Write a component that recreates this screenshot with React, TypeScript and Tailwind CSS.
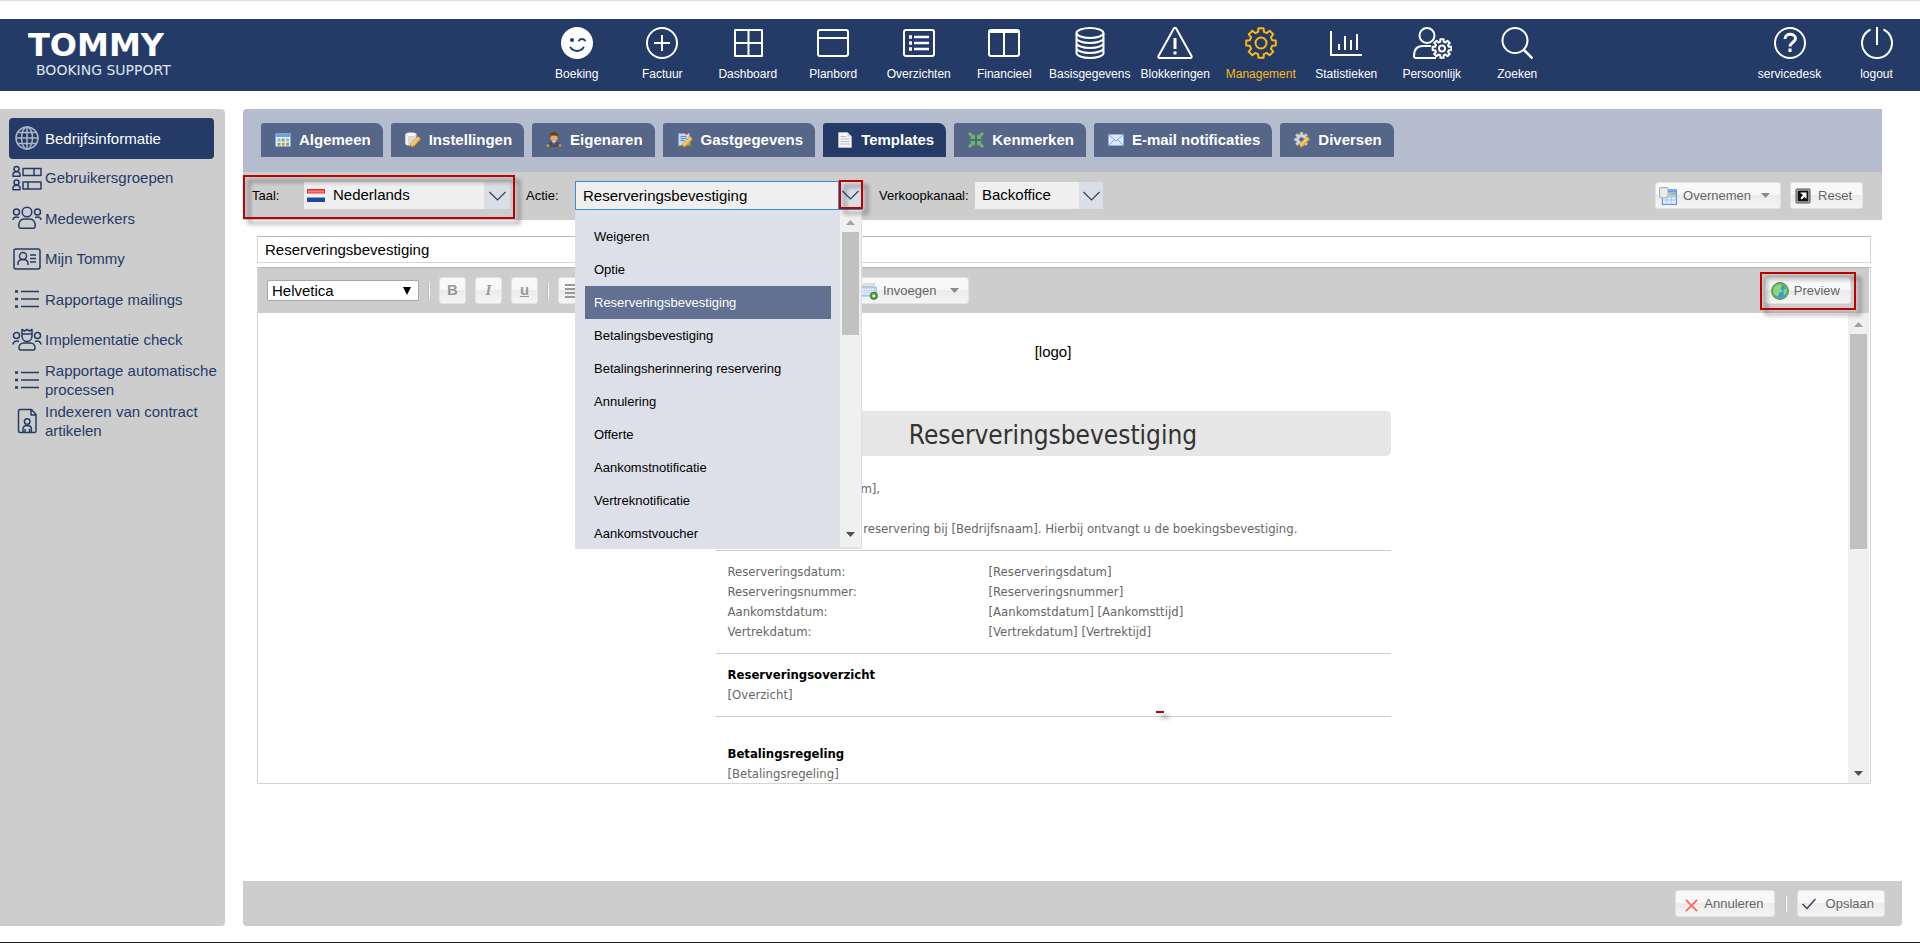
import type { ReactNode } from 'react';

function gearPath(cx: number, cy: number, outer: number, inner: number, teeth: number): string {
  const step = (Math.PI * 2) / teeth;
  const points: string[] = [];
  for (let i = 0; i < teeth; i++) {
    const a = i * step - Math.PI / 2;
    const corners: [number, number][] = [
      [inner, a - step * 0.32],
      [outer, a - step * 0.22],
      [outer, a + step * 0.22],
      [inner, a + step * 0.32],
    ];
    corners.forEach(([r, t]) => points.push(`${(cx + r * Math.cos(t)).toFixed(2)} ${(cy + r * Math.sin(t)).toFixed(2)}`));
  }
  return `M${points.join('L')}Z`;
}

function Line({ children, w = 32, h = 32, sw = 2 }: { children: ReactNode; w?: number; h?: number; sw?: number }) {
  return (
    <svg
      width={w}
      height={h}
      viewBox={`0 0 ${w} ${h}`}
      fill="none"
      stroke="currentColor"
      strokeWidth={sw}
      strokeLinejoin="round"
      aria-hidden="true"
      className="shrink-0"
    >
      {children}
    </svg>
  );
}

const navItems: { label: string; icon: ReactNode; active?: boolean }[] = [
  {
    label: 'Boeking',
    icon: (
      <Line>
        <circle cx="16" cy="16" r="16" fill="currentColor" stroke="none" />
        <circle cx="11" cy="13" r="2" fill="#243b67" stroke="none" />
        <path d="M18 13.5c1.500-2 4.500-2 6 0M9.500 20.500c3 4.500 10 4.500 13 0" stroke="#243b67" strokeLinecap="round" />
      </Line>
    ),
  },
  {
    label: 'Factuur',
    icon: (
      <Line>
        <circle cx="16" cy="16" r="15" />
        <path d="M16 8v16M8 16h16" />
      </Line>
    ),
  },
  {
    label: 'Dashboard',
    icon: (
      <Line>
        <path d="M3 3h27v26H3zM16.500 3v26M3 16h27" />
      </Line>
    ),
  },
  {
    label: 'Planbord',
    icon: (
      <Line>
        <rect x="1" y="3" width="30" height="26" rx="2" />
        <path d="M1 11h30" />
      </Line>
    ),
  },
  {
    label: 'Overzichten',
    icon: (
      <Line>
        <rect x="1" y="3" width="30" height="26" rx="2" />
        <path d="M11 10h15M11 16h15M11 22h15" strokeWidth="2.500" />
        <path d="M6 10h3M6 16h3M6 22h3" strokeWidth="3.500" />
      </Line>
    ),
  },
  {
    label: 'Financieel',
    icon: (
      <Line>
        <rect x="1" y="3" width="30" height="26" rx="2" />
        <path d="M16 3v26" />
        <path d="M1 4.500h30" strokeWidth="3" />
      </Line>
    ),
  },
  {
    label: 'Basisgegevens',
    icon: (
      <Line>
        <ellipse cx="16" cy="6" rx="13.500" ry="5" />
        <path d="M2.500 6v20c0 2.800 6 5 13.500 5s13.500-2.200 13.500-5V6M2.500 11c0 2.800 6 5 13.500 5s13.500-2.200 13.500-5M2.500 16c0 2.800 6 5 13.500 5s13.500-2.200 13.500-5M2.500 21c0 2.800 6 5 13.500 5s13.500-2.200 13.500-5" />
      </Line>
    ),
  },
  {
    label: 'Blokkeringen',
    icon: (
      <Line w={36}>
        <path d="M16.800 1.500Q18 0 19.200 1.500L34.500 29Q35 31 33.500 31H2.500Q1 31 1.500 29Z" />
        <path d="M18 11v11M18 24.500v3" strokeWidth="3" />
      </Line>
    ),
  },
  {
    label: 'Management',
    active: true,
    icon: (
      <Line>
        <path d={gearPath(16, 16, 15, 11.5, 8)} />
        <circle cx="16" cy="16" r="5.500" />
      </Line>
    ),
  },
  {
    label: 'Statistieken',
    icon: (
      <Line>
        <path d="M1 4v24h31M9 23v-6M15 23V9M21 23V13M27 23V7" />
      </Line>
    ),
  },
  {
    label: 'Persoonlijk',
    icon: (
      <Line w={40}>
        <circle cx="15" cy="8.500" r="7.500" />
        <path d="M24 31H4c-1.500 0-2-.5-2-2 0-7 3-10 9-10h8" />
        <path d={gearPath(30, 21.500, 9.500, 7, 8)} />
        <circle cx="30" cy="21.500" r="3" />
      </Line>
    ),
  },
  {
    label: 'Zoeken',
    icon: (
      <Line>
        <circle cx="14" cy="13.500" r="12.500" />
        <path d="M22.500 22.500l9 9" strokeWidth="2.500" />
      </Line>
    ),
  },
];

const userItems: { label: string; icon: ReactNode }[] = [
  {
    label: 'servicedesk',
    icon: (
      <Line>
        <circle cx="16" cy="16" r="15" />
        <path d="M11 12c0-6.500 10.500-6 10.500-.5 0 4-5.500 4-5.500 8M16 21.500v3.500" strokeWidth="3" />
      </Line>
    ),
  },
  {
    label: 'logout',
    icon: (
      <Line>
        <path d="M9.500 2.500a15 15 0 1 0 13 0M16 0v18" />
      </Line>
    ),
  },
];

const listIcon = (
  <Line w={30} h={24} sw={1.5}>
    <path d="M9 4.500h18M9 12h18M9 19.500h18" />
    <path d="M3 4.500h3M3 12h3M3 19.500h3" strokeWidth="2.500" />
  </Line>
);

const sideItems: { label: string; icon: ReactNode }[] = [
  {
    label: 'Gebruikersgroepen',
    icon: (
      <Line w={30} h={26} sw={1.5}>
        <circle cx="4.500" cy="4" r="2.500" />
        <path d="M1 11.200V9.500C1 7.500 2.500 6.700 4.500 6.700S8 7.500 8 9.500v1.700z" />
        <circle cx="4.500" cy="17.500" r="2.500" />
        <path d="M1 24.700V23c0-2 1.500-2.800 3.500-2.800S8 21 8 23v1.700z" />
        <path d="M11 3.500h18v7H11zM22 3.500v7M11 17h18v7H11zM16 17v7" />
      </Line>
    ),
  },
  {
    label: 'Medewerkers',
    icon: (
      <Line w={30} h={24} sw={1.5}>
        <circle cx="15" cy="6" r="4.800" />
        <circle cx="4.500" cy="6" r="3" />
        <circle cx="25.500" cy="6" r="3" />
        <path d="M7 21c-1-5 2-8 5-8h6c3 0 6 3 5 8-.2.8-1 1.200-1.500 1.200h-13C8 22.200 7.200 21.800 7 21zM1 14c0-3 3-3.500 6-2.500M29 14c0-3-3-3.500-6-2.500" />
      </Line>
    ),
  },
  {
    label: 'Mijn Tommy',
    icon: (
      <Line w={30} h={24} sw={1.5}>
        <rect x="2" y="2" width="26" height="20" rx="2" />
        <circle cx="11" cy="9" r="3.500" />
        <path d="M6 18v-1.500c0-2.500 2-4 5-4s5 1.500 5 4V18M18 8h6M18 11.500h6M18 15h6" />
      </Line>
    ),
  },
  { label: 'Rapportage mailings', icon: listIcon },
  {
    label: 'Implementatie check',
    icon: (
      <Line w={30} h={24} sw={1.5}>
        <path d="M10 8V1.500l2.500 1.500L15 1.500 17.500 3 20 1.500V8c0 3-2 5.500-5 5.500S10 11 10 8zM10 6h10" />
        <circle cx="4.500" cy="7.500" r="3" />
        <circle cx="25.500" cy="7.500" r="3" />
        <path d="M7 20c0-3 2-5 4.500-5h7c2.500 0 4.500 2 4.500 5 0 1.500-.5 2-2 2H9c-1.500 0-2-.5-2-2zM1 16.500c0-3 3-4 6-3M29 16.500c0-3-3-4-6-3" />
      </Line>
    ),
  },
  { label: 'Rapportage automatische processen', icon: listIcon },
  {
    label: 'Indexeren van contract artikelen',
    icon: (
      <Line w={30} h={26} sw={1.5}>
        <path d="M8 1.500h11.500l4.500 5V23q0 1.500-1.500 1.500H8Q6.500 24.500 6.500 23V3Q6.500 1.500 8 1.500zM19 1.500V7h5" />
        <circle cx="15.200" cy="13.500" r="2.800" />
        <path d="M11 24v-3c0-2 1.500-3.500 4.200-3.500s4.200 1.500 4.200 3.500v3M13 21v3M17.500 21v3" />
      </Line>
    ),
  },
];

function Small({ children, size = 16 }: { children: ReactNode; size?: number }) {
  return (
    <svg width={size} height={size} viewBox="0 0 16 16" aria-hidden="true" className="shrink-0">
      {children}
    </svg>
  );
}

const pencil = (
  <>
    <path d="M13 4.500l2.700 2.500-7 7.500-3.700 1.200.8-3.700z" fill="#f2b84b" stroke="#c98626" strokeWidth=".7" />
    <path d="M13.500 5.500l-7 7.500" stroke="#fde6a6" />
    <path d="M5 15.700l.5-2 1.500 1.400z" fill="#4a3a28" />
  </>
);

const tabs: { label: string; icon: ReactNode; active?: boolean }[] = [
  {
    label: 'Algemeen',
    icon: (
      <Small>
        <rect x=".5" y="1.500" width="15" height="13" rx="1" fill="#e8f0fb" stroke="#7aa6dc" />
        <path d="M1 2h14v3H1z" fill="#6ea0e0" />
        <path d="M2.500 6.500h3v3h-3zM11 6.500h3v3h-3z" fill="#8fb7e8" />
        <path d="M6.700 6.500h3v3h-3zM2.500 10.700h3v3h-3z" fill="#76b456" />
        <path d="M6.700 10.700h3v3h-3z" fill="#ee8843" />
        <path d="M11 10.700h3v3h-3z" fill="#76b456" />
      </Small>
    ),
  },
  {
    label: 'Instellingen',
    icon: (
      <Small>
        <path d="M.5 2.500v9c0 1.500 3 2.500 6 2.500s5-1 5-2.500v-9z" fill="#d9d9d9" />
        <path d="M.5 2.500v9c0 1 1 1.600 2.500 2V3z" fill="#f6f6f6" />
        <ellipse cx="6" cy="2.500" rx="5.500" ry="2" fill="#fbfbfb" stroke="#bdbdbd" strokeWidth=".5" />
        {pencil}
      </Small>
    ),
  },
  {
    label: 'Eigenaren',
    icon: (
      <Small>
        <path d="M.5 15c0-4 2.500-5.500 7.500-5.500s7.500 1.500 7.500 5.500z" fill="#4e4f54" />
        <path d="M6 9l2 4 2-4z" fill="#e8e8e8" />
        <path d="M7.500 10h1l.6 4h-2z" fill="#3a5a9a" />
        <circle cx="8" cy="5.500" r="3.700" fill="#e9a873" />
        <path d="M3.800 6C3 1.800 5 .3 8 .3s5 1.500 4.200 5.700L11 3.800 5.500 3.600z" fill="#6e3d1d" />
        <circle cx="2" cy="13.500" r="1.500" fill="#d88a50" />
        <circle cx="14" cy="13.500" r="1.500" fill="#d88a50" />
      </Small>
    ),
  },
  {
    label: 'Gastgegevens',
    icon: (
      <Small>
        <path d="M0 14.500l4-5h9l2.500 5z" fill="#4f9c3c" />
        <path d="M1.500 1.500h11v11l-11 1z" fill="#c5daf5" stroke="#7ca3d8" strokeWidth=".6" />
        <path d="M3.500 4.500h6M3.500 6.500h6M3.500 8.500h4" stroke="#6388c0" />
        <circle cx="9.500" cy="1.500" r="1.200" fill="#d3302b" />
        {pencil}
      </Small>
    ),
  },
  {
    label: 'Templates',
    active: true,
    icon: (
      <Small>
        <path d="M1.500.5h9l4 4v11h-13z" fill="#f5f5f5" stroke="#c9c9c9" strokeWidth=".6" />
        <path d="M10.500.5v4h4z" fill="#cfcfcf" />
        <path d="M3.500 4.500h5.500M3.500 7h9M3.500 9.500h9M3.500 12h9" stroke="#b9bcc2" />
      </Small>
    ),
  },
  {
    label: 'Kenmerken',
    icon: (
      <Small>
        <g fill="#6cb85e">
          <path d="M7 7H2l1.500-1.500L0 2l2-2 3.500 3.500L7 2z" />
          <path d="M9 7h5l-1.500-1.500L16 2l-2-2-3.500 3.500L9 2z" />
          <path d="M7 9H2l1.500 1.500L0 14l2 2 3.500-3.500L7 14z" />
          <path d="M9 9h5l-1.500 1.500L16 14l-2 2-3.500-3.500L9 14z" />
        </g>
      </Small>
    ),
  },
  {
    label: 'E-mail notificaties',
    icon: (
      <Small>
        <rect x=".5" y="2.500" width="15" height="11" rx=".5" fill="#dcebff" stroke="#86b2ee" />
        <path d="M1 3l7 6 7-6M1 13l5-5M15 13l-5-5" fill="none" stroke="#7aa5e2" />
      </Small>
    ),
  },
  {
    label: 'Diversen',
    icon: (
      <Small>
        <path d={gearPath(7.5, 7.5, 7.5, 5.5, 8)} fill="#d4d4d4" stroke="#a5a5a5" strokeWidth=".5" />
        <circle cx="7.500" cy="7.500" r="2.300" fill="#566688" />
        {pencil}
      </Small>
    ),
  },
];

const actions = [
  'Weigeren',
  'Optie',
  'Reserveringsbevestiging',
  'Betalingsbevestiging',
  'Betalingsherinnering reservering',
  'Annulering',
  'Offerte',
  'Aankomstnotificatie',
  'Vertreknotificatie',
  'Aankomstvoucher',
];

const details = [
  ['Reserveringsdatum:', '[Reserveringsdatum]'],
  ['Reserveringsnummer:', '[Reserveringsnummer]'],
  ['Aankomstdatum:', '[Aankomstdatum] [Aankomsttijd]'],
  ['Vertrekdatum:', '[Vertrekdatum] [Vertrektijd]'],
];

const buttonFace =
  'flex h-[27px] shrink-0 items-center rounded-[3px] border border-[#e2e2e2] bg-[linear-gradient(#f8f8f8_50%,#ebebeb_50%,#f5f5f5)] text-[13px] text-[#666]';

function Marker({ className }: { className: string }) {
  return (
    <span
      aria-hidden="true"
      className={`pointer-events-none absolute z-20 border-2 border-[#c00000] drop-shadow-[5px_5px_2px_rgba(0,0,0,0.45)] ${className}`}
    />
  );
}

function Chevron() {
  return (
    <svg width="17" height="10" viewBox="0 0 17 10" fill="none" stroke="#33415f" strokeWidth="1.200" aria-hidden="true">
      <path d="M.5 1l8 8 8-8" />
    </svg>
  );
}

function Triangle({ up = false, color }: { up?: boolean; color: string }) {
  return (
    <svg width="9" height="5" viewBox="0 0 9 5" fill={color} aria-hidden="true" className="shrink-0">
      <path d={up ? 'M0 5h9L4.500 0z' : 'M0 0h9L4.500 5z'} />
    </svg>
  );
}

function Divider() {
  return <span aria-hidden="true" className="h-4 w-[2px] shrink-0 border-l border-[#bbb] bg-white" />;
}

function MenuLink({ label, icon, active = false }: { label: string; icon: ReactNode; active?: boolean }) {
  return (
    <a
      href="#"
      aria-current={active ? 'page' : undefined}
      className={`flex flex-col items-center gap-2 whitespace-nowrap text-xs leading-[14px] ${active ? 'text-[#fcb813]' : 'text-white'}`}
    >
      {icon}
      {label}
    </a>
  );
}

export default function App() {
  return (
    <div className="flex min-h-screen flex-col border-t border-b border-t-[#dcdce2] border-b-[#1c1a1a] bg-white pt-[18px] font-['Liberation_Sans',Arial,sans-serif] text-black">
      <header className="flex h-[72px] items-start bg-[#243b67] pt-2">
        <a href="#" className="flex w-[534px] flex-col pl-7 font-['DejaVu_Sans',sans-serif] text-white">
          <span className="text-[32px] font-bold leading-[36px]">TOMMY</span>
          <span className="pl-2 text-[14px] leading-[14px] text-[#dfe4ee]">BOOKING SUPPORT</span>
        </a>
        <nav aria-label="Hoofdmenu" className="grid w-[1026px] grid-cols-12">
          {navItems.map((item) => (
            <MenuLink key={item.label} {...item} />
          ))}
        </nav>
        <nav aria-label="Gebruiker" className="ml-auto grid w-[174px] grid-cols-2">
          {userItems.map((item) => (
            <MenuLink key={item.label} {...item} />
          ))}
        </nav>
      </header>

      <div className="mt-[18px] mb-4 flex grow gap-[18px] pr-[18px]">
        <aside className="w-[225px] shrink-0 rounded-r bg-[#cdcdcd] pt-[9px] pl-[9px]">
          <nav aria-label="Management" className="grid h-[324px] grid-rows-8 text-[15px] leading-[19px] text-[#243b67]">
            <a
              href="#"
              aria-current="page"
              className="mr-[11px] flex h-[41px] items-center gap-1.5 rounded bg-[#243b67] pb-px pl-1.5 text-white"
            >
              <span className="text-[#aeb6c6]">
                <Line w={24} h={24} sw={1.5}>
                  <circle cx="12" cy="12" r="11" />
                  <ellipse cx="12" cy="12" rx="5.500" ry="11" />
                  <path d="M12 1v22M1 12h22M2.500 6.500h19M2.500 17.500h19" />
                </Line>
              </span>
              Bedrijfsinformatie
            </a>
            {sideItems.map((item) => (
              <a key={item.label} href="#" className="flex items-center gap-[3px] pb-[2px] pl-[3px]">
                {item.icon}
                <span>{item.label}</span>
              </a>
            ))}
          </nav>
        </aside>

        <main className="flex min-w-0 grow flex-col">
          <div className="mr-5 flex gap-2 rounded-tl bg-[#b5bccd] px-[18px] pt-[14px] pb-[15px]">
            {tabs.map((tab) => (
              <button
                key={tab.label}
                type="button"
                className={`flex h-[34px] items-center gap-2 whitespace-nowrap rounded-tl-[3px] rounded-tr-lg pr-3 pl-[14px] text-[15px] font-bold text-white ${
                  tab.active ? 'bg-[#243b67]' : 'bg-[#566688]'
                }`}
              >
                {tab.icon}
                {tab.label}
              </button>
            ))}
          </div>

          <div className="mr-5 flex h-12 items-center bg-[#cdcdcd] pr-[19px] pb-px text-[13px]">
            <div className="relative flex h-[43px] w-[272px] items-center pl-[9px]">
              <label htmlFor="taal" className="w-[52px]">
                Taal:
              </label>
              <div className="relative flex w-[206px] items-center">
                <select id="taal" className="h-[27px] w-full appearance-none bg-[#efefef] pl-[29px] text-[15px]">
                  <option>Nederlands</option>
                </select>
                <svg width="18" height="13" viewBox="0 0 18 13" aria-hidden="true" className="absolute left-[3px]">
                  <path d="M0 0h18v13H0z" fill="#f2f2f5" />
                  <path d="M0 0h18v4.500H0z" fill="#e8302f" />
                  <path d="M1 1.500h16v2H1z" fill="#f4827c" />
                  <path d="M0 8.500h18V13H0z" fill="#1d4797" />
                </svg>
                <span className="pointer-events-none absolute right-0 flex h-[27px] w-[26px] items-center justify-center bg-[#d9dee7]">
                  <Chevron />
                </span>
              </div>
              <Marker className="inset-x-0 top-px -bottom-[2px]" />
            </div>

            <label htmlFor="actie" className="ml-[11px] w-[49px]">
              Actie:
            </label>
            <div className="relative flex w-[287px]">
              <input
                id="actie"
                role="combobox"
                aria-expanded="true"
                aria-controls="actie-lijst"
                readOnly
                value="Reserveringsbevestiging"
                className="h-[29px] min-w-0 grow border border-[#3b8fd0] bg-[#efefef] pl-[7px] text-[15px] outline-none"
              />
              <button
                type="button"
                aria-label="Open actielijst"
                className="flex w-[23px] items-center justify-center border-b border-[#3b8fd0] bg-[#d9dee7]"
              >
                <Chevron />
              </button>
              <Marker className="-top-px -right-px h-[29px] w-6" />
              <div className="absolute top-full left-0 z-10 flex h-[339px] w-full border-r border-b-2 border-[#e0e0e4] bg-[#dde0e9]">
                <ul id="actie-lijst" role="listbox" aria-label="Actie" className="grow overflow-hidden pt-[10px] pr-[9px] pl-[10px]">
                  {actions.map((action, i) => (
                    <li
                      key={action}
                      role="option"
                      aria-selected={i === 2}
                      className={`h-[33px] pl-[9px] leading-[33px] ${i === 2 ? 'bg-[#627091] text-white' : ''}`}
                    >
                      {action}
                    </li>
                  ))}
                </ul>
                <div aria-hidden="true" className="flex w-[21px] flex-col items-center bg-[#f0f0f0] py-[10px]">
                  <Triangle up color="#a3a3a3" />
                  <span className="mt-[7px] h-[103px] w-[17px] bg-[#c1c1c1]" />
                  <span className="grow" />
                  <Triangle color="#505050" />
                </div>
              </div>
            </div>

            <label htmlFor="kanaal" className="ml-[17px] w-24">
              Verkoopkanaal:
            </label>
            <div className="relative flex w-32 items-center">
              <select id="kanaal" className="h-[27px] w-full appearance-none bg-[#efefef] pl-[7px] text-[15px]">
                <option>Backoffice</option>
              </select>
              <span className="pointer-events-none absolute right-0 flex h-[27px] w-6 items-center justify-center bg-[#d9dee7]">
                <Chevron />
              </span>
            </div>

            <div className="ml-auto flex gap-[9px]">
              <button type="button" className={`${buttonFace} gap-[6px] pr-[10px] pl-[3px]`}>
                <Small size={18}>
                  <rect x="3" y="2.500" width="12.500" height="13" fill="#e3eefc" stroke="#5b8ed6" />
                  <path d="M3.500 3h12v2h-12z" fill="#6b9be0" />
                  <path d="M9 5.500h6v2H9z" fill="#8cc47a" />
                  <path d="M3 8.500h12.500M3 11.500h12.500M7 5v10.500M11 5v10.500" stroke="#a9c6ee" />
                  <rect x=".5" y=".5" width="7.500" height="9" rx="1.500" fill="#ececec" stroke="#b0b0b0" />
                </Small>
                Overnemen
                <span className="ml-1">
                  <Triangle color="#8b8b8b" />
                </span>
              </button>
              <button type="button" className={`${buttonFace} gap-[7px] pr-[10px] pl-1`}>
                <Small>
                  <rect x="1" y="1" width="14" height="14" rx="1" fill="#111" stroke="#8a8a8a" strokeWidth="1.500" />
                  <rect x="2.200" y="2.200" width="11.600" height="11.600" fill="none" stroke="#e4e4e4" strokeWidth=".7" />
                  <path d="M5 4.500h6.500V11L9.500 9 6.500 11.500 5.500 10l2.500-3z" fill="#fff" />
                </Small>
                Reset
              </button>
            </div>
          </div>

          <div className="mt-4 mr-[31px] ml-[14px]">
            <input
              aria-label="Onderwerp"
              defaultValue="Reserveringsbevestiging"
              className="block h-[27px] w-full border border-[#d5d5d5] border-t-[#b9b9b9] px-[7px] text-[15px] outline-none"
            />
            <section aria-label="Sjabloon" className="mt-1 border border-[#d5d5d5] border-t-[#b9b9b9]">
              <div className="mr-px flex h-[45px] items-center bg-[#cdcdcd] pr-[18px] pl-[9px]">
                <div className="relative flex w-[152px] items-center">
                  <select
                    aria-label="Lettertype"
                    className="h-[21px] w-full appearance-none rounded-[2px] border border-[#a6a6a6] bg-white pl-1 text-[15px] leading-[19px]"
                  >
                    <option>Helvetica</option>
                  </select>
                  <svg width="8" height="8" viewBox="0 0 8 8" aria-hidden="true" className="pointer-events-none absolute right-2">
                    <path d="M0 0h8L4 8z" />
                  </svg>
                </div>
                <div className="ml-[9px] flex items-center gap-[9px]">
                  <Divider />
                  <button type="button" aria-label="Vet" className={`${buttonFace} w-[27px] justify-center font-bold text-[#999]`}>
                    <b className="text-[15px]">B</b>
                  </button>
                  <button type="button" aria-label="Cursief" className={`${buttonFace} w-[27px] justify-center text-[#999]`}>
                    <i className="font-['Liberation_Serif',serif] text-[15px] font-bold">I</i>
                  </button>
                  <button type="button" aria-label="Onderstrepen" className={`${buttonFace} w-[27px] justify-center text-[#999]`}>
                    <u className="text-[15px] font-bold">u</u>
                  </button>
                  <Divider />
                  <button type="button" aria-label="Links uitlijnen" className={`${buttonFace} w-[27px] justify-center text-[#999]`}>
                    <svg width="14" height="14" viewBox="0 0 14 14" stroke="currentColor" strokeWidth="2" aria-hidden="true">
                      <path d="M0 1h14M0 5h14M0 9h14M0 13h10" />
                    </svg>
                  </button>
                </div>
                <button type="button" className={`${buttonFace} ml-[271px] gap-[5px] pr-[9px] pl-[3px]`}>
                  <Small size={18}>
                    <path d="M1 4V2.500L5 1.500h8l-1 2.500z" fill="#e6e6e6" stroke="#bcbcbc" strokeWidth=".6" />
                    <path d="M.5 4.500h14v8H.5z" fill="#bcd5f5" stroke="#84abe0" strokeWidth=".6" />
                    <path d="M2 6.500h11M2 8.500h11M2 10.500h8" stroke="#f4f9ff" strokeDasharray="1.500 .7" />
                    <circle cx="12.300" cy="12.300" r="3.300" fill="#4f9b35" stroke="#2f6d20" strokeWidth=".6" />
                    <circle cx="12.300" cy="12.300" r="1.400" fill="#e9f7e4" />
                  </Small>
                  Invoegen
                  <span className="ml-2">
                    <Triangle color="#8b8b8b" />
                  </span>
                </button>
                <div className="relative ml-auto">
                  <button type="button" className={`${buttonFace} gap-[5px] pr-[10px] pl-[5px]`}>
                    <Small size={18}>
                      <circle cx="8" cy="8" r="7.500" fill="#67b552" stroke="#478a3c" strokeWidth=".8" />
                      <circle cx="8" cy="8.500" r="6" fill="#3d9bd8" />
                      <path d="M2 7c1-4 4-5.500 8-4.500L8.500 6l2 2-3 1.500L6 13C3 12 1.500 10 2 7zM11 7l3-1.500c.5 3-.5 5-2.500 6.500z" fill="#8fd57d" />
                    </Small>
                    Preview
                  </button>
                  <Marker className="-inset-x-[5px] -top-[5px] -bottom-[6px]" />
                </div>
              </div>

              <div className="mr-px flex h-[470px] overflow-hidden">
                <div className="grow">
                  <article className="mx-auto max-w-[675px] pt-[29px] font-['DejaVu_Sans_Condensed','DejaVu_Sans',sans-serif] text-[13px] leading-5 text-[#666] [font-stretch:condensed]">
                    <p className="text-center font-['Liberation_Sans',Arial,sans-serif] text-[15px] text-black">[logo]</p>
                    <h1 className="mt-[49px] rounded-[5px] bg-[#e6e6e6] pt-[3px] text-center text-[26px] leading-[42px] text-[#333]">
                      Reserveringsbevestiging
                    </h1>
                    <p className="mt-[23px] px-3">Geachte [Bezoekernaam],</p>
                    <p className="mt-5 mb-[11px] px-3">
                      Hartelijk dank voor uw reservering bij [Bedrijfsnaam]. Hierbij ontvangt u de boekingsbevestiging.
                    </p>
                    <div className="border-t border-[#ccc] px-3 py-[11px]">
                      <table className="w-full">
                        <tbody>
                          {details.map(([name, value]) => (
                            <tr key={name}>
                              <th scope="row" className="w-[261px] p-0 text-left font-normal">
                                {name}
                              </th>
                              <td className="p-0">{value}</td>
                            </tr>
                          ))}
                        </tbody>
                      </table>
                    </div>
                    <div className="relative border-t border-[#ccc] px-3 py-[11px]">
                      <h2 className="font-bold text-black">Reserveringsoverzicht</h2>
                      <p>[Overzicht]</p>
                      <span
                        aria-hidden="true"
                        className="absolute bottom-[3px] left-[440px] h-[2px] w-2 bg-[#c00000] shadow-[5px_5px_4px_rgba(0,0,0,0.5)]"
                      />
                    </div>
                    <div className="border-t border-[#ccc] px-3 pt-[27px]">
                      <h2 className="font-bold text-black">Betalingsregeling</h2>
                      <p>[Betalingsregeling]</p>
                    </div>
                  </article>
                </div>
                <div aria-hidden="true" className="flex w-[21px] shrink-0 flex-col items-center bg-[#f0f0f0] pt-[9px] pb-[7px]">
                  <Triangle up color="#a3a3a3" />
                  <span className="mt-[7px] h-[215px] w-[17px] bg-[#c1c1c1]" />
                  <span className="grow" />
                  <Triangle color="#505050" />
                </div>
              </div>
            </section>
          </div>

          <footer className="mt-auto flex h-[45px] items-center justify-end gap-[10px] rounded-b bg-[#cdcdcd] pr-[17px]">
            <button type="button" className={`${buttonFace} gap-[6px] pr-[10px] pl-[9px]`}>
              <svg width="13" height="13" viewBox="0 0 14 14" stroke="#ff6a5c" strokeWidth="2" aria-hidden="true" className="mt-1">
                <path d="M1 1l12 12M13 1L1 13" />
              </svg>
              Annuleren
            </button>
            <Divider />
            <button type="button" className={`${buttonFace} gap-[10px] pr-[10px] pl-1`}>
              <svg width="14" height="12" viewBox="0 0 14 12" fill="none" stroke="#33415f" strokeWidth="1.500" aria-hidden="true">
                <path d="M.5 6l4.500 4.500L13.500 1" />
              </svg>
              Opslaan
            </button>
          </footer>
        </main>
      </div>
    </div>
  );
}
